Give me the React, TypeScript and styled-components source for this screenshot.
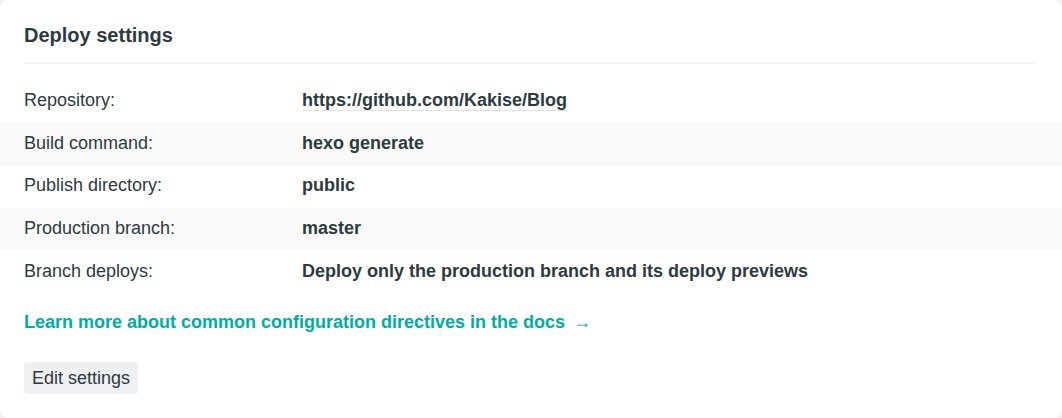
import React from "react";
import styled, { createGlobalStyle } from "styled-components";

const GlobalStyle = createGlobalStyle`
  html, body {
    margin: 0;
    padding: 0;
    background: #eef0f1;
  }
  body {
    font-family: "Liberation Sans", Arial, Helvetica, sans-serif;
    color: #2d3b41;
  }
`;

const Card = styled.section`
  width: 1062px;
  height: 418px;
  box-sizing: border-box;
  background: #ffffff;
  border-radius: 8px;
  overflow: hidden;
  padding: 20px 0 0;
`;

const Header = styled.header`
  margin: 0 24px;
  padding-bottom: 12px;
  border-bottom: 2px solid #f5f6f6;
`;

const Title = styled.h2`
  margin: 0;
  font-size: 20px;
  line-height: 30px;
  font-weight: 700;
  color: #2d3b41;
`;

const List = styled.dl`
  margin: 16px 0 0;
  padding: 0;
`;

const Row = styled.div<{ $striped?: boolean }>`
  display: grid;
  grid-template-columns: 278px 1fr;
  align-items: center;
  box-sizing: border-box;
  height: 42.8px;
  padding: 0 24px 3px;
  background: ${(p) => (p.$striped ? "#f9f9f9" : "transparent")};
`;

const Label = styled.dt`
  margin: 0;
  font-size: 18px;
  line-height: 24px;
  color: #2d3b41;
`;

const Value = styled.dd`
  margin: 0;
  font-size: 18px;
  line-height: 24px;
  font-weight: 700;
  color: #2d3b41;
`;

const RepoLink = styled.a`
  color: inherit;
  text-decoration: none;
  border-bottom: 1px solid #dfe3e4;
`;

const Footer = styled.div`
  padding: 15.5px 24px 0;
  display: flex;
  flex-direction: column;
  align-items: flex-start;
  gap: 26.5px;
`;

const DocsLink = styled.a`
  font-size: 18px;
  font-weight: 700;
  line-height: 26px;
  color: #00ad9f;
  text-decoration: none;
`;

const Arrow = styled.span`
  font-weight: 400;
  margin-left: 8px;
`;

const Button = styled.button`
  font-family: inherit;
  font-size: 18px;
  line-height: 24px;
  color: #2d3b41;
  background: #eef0f1;
  border: none;
  border-radius: 4px;
  padding: 4px 8px;
  cursor: pointer;
`;

const rows = [
  { label: "Repository:", value: "https://github.com/Kakise/Blog", link: true },
  { label: "Build command:", value: "hexo generate" },
  { label: "Publish directory:", value: "public" },
  { label: "Production branch:", value: "master" },
  {
    label: "Branch deploys:",
    value: "Deploy only the production branch and its deploy previews",
  },
];

export default function App() {
  return (
    <>
      <GlobalStyle />
      <Card>
        <Header>
          <Title>Deploy settings</Title>
        </Header>
        <List>
          {rows.map((r, i) => (
            <Row key={r.label} $striped={i % 2 === 1}>
              <Label>{r.label}</Label>
              <Value>
                {r.link ? <RepoLink href="#">{r.value}</RepoLink> : r.value}
              </Value>
            </Row>
          ))}
        </List>
        <Footer>
          <DocsLink href="#">
            Learn more about common configuration directives in the docs
            <Arrow>→</Arrow>
          </DocsLink>
          <Button>Edit settings</Button>
        </Footer>
      </Card>
    </>
  );
}
